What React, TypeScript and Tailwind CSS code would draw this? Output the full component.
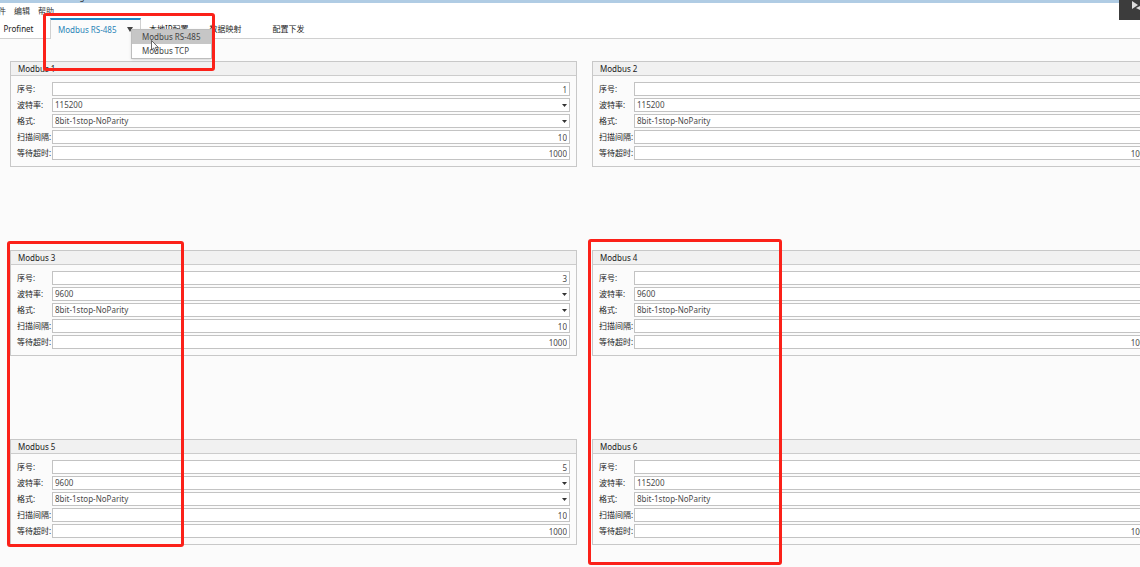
import React, { useState } from 'react';
import { clsx } from 'clsx';

type Channel = {
  id: number;
  baud: string;
  format: string;
  scan: number;
  timeout: number;
};

const channels: Channel[] = [
  { id: 1, baud: '115200', format: '8bit-1stop-NoParity', scan: 10, timeout: 1000 },
  { id: 2, baud: '115200', format: '8bit-1stop-NoParity', scan: 10, timeout: 1000 },
  { id: 3, baud: '9600', format: '8bit-1stop-NoParity', scan: 10, timeout: 1000 },
  { id: 4, baud: '9600', format: '8bit-1stop-NoParity', scan: 10, timeout: 1000 },
  { id: 5, baud: '9600', format: '8bit-1stop-NoParity', scan: 10, timeout: 1000 },
  { id: 6, baud: '115200', format: '8bit-1stop-NoParity', scan: 10, timeout: 1000 },
];

const baudRates = ['9600', '19200', '38400', '57600', '115200'];
const formats = ['8bit-1stop-NoParity', '8bit-1stop-Even', '8bit-1stop-Odd'];

const fieldClass =
  'block h-[14px] w-full min-w-0 appearance-none rounded-none border border-[#c3c3c3] bg-white px-[2px] py-0 text-[8px] leading-[12px] text-[#4a4a4a] outline-none';

const Row: React.FC<{ id: string; label: string; children: React.ReactNode }> = ({ id, label, children }) => (
  <div className="flex h-[14px] items-center">
    <label htmlFor={id} className="w-[35px] shrink-0 whitespace-nowrap text-[#222222]">
      {label}
    </label>
    <div className="relative min-w-0 flex-1">{children}</div>
  </div>
);

const NumberRow: React.FC<{ id: string; label: string; value: number }> = ({ id, label, value }) => (
  <Row id={id} label={label}>
    <input id={id} type="text" inputMode="numeric" defaultValue={value} className={clsx(fieldClass, 'text-right')} />
  </Row>
);

const SelectRow: React.FC<{ id: string; label: string; value: string; options: string[] }> = ({
  id,
  label,
  value,
  options,
}) => (
  <Row id={id} label={label}>
    <select id={id} defaultValue={value} className={fieldClass}>
      {options.map((o) => (
        <option key={o}>{o}</option>
      ))}
    </select>
    <svg className="pointer-events-none absolute top-[6px] right-[3px] h-[3px] w-[5px]" viewBox="0 0 5 3">
      <path d="M0 0h5L2.5 3z" fill="#333333" />
    </svg>
  </Row>
);

const ChannelPanel: React.FC<{ channel: Channel }> = ({ channel }) => {
  const key = `ch${channel.id}`;
  return (
    <section className="border border-[#c8c8c8]">
      <h2 className="h-[14px] border-b border-[#cccccc] bg-[#f1f1f1] px-[7px] leading-[14px] text-[#222222]">
        Modbus {channel.id}
      </h2>
      <div className="flex flex-col gap-[2px] px-[6px] py-[6px]">
        <NumberRow id={`${key}-no`} label="序号:" value={channel.id} />
        <SelectRow id={`${key}-baud`} label="波特率:" value={channel.baud} options={baudRates} />
        <SelectRow id={`${key}-format`} label="格式:" value={channel.format} options={formats} />
        <NumberRow id={`${key}-scan`} label="扫描间隔:" value={channel.scan} />
        <NumberRow id={`${key}-timeout`} label="等待超时:" value={channel.timeout} />
      </div>
    </section>
  );
};

const Highlight: React.FC<{ className: string }> = ({ className }) => (
  <div className={clsx('pointer-events-none absolute z-20 rounded-[3px] border-3 border-[#fb2119]', className)} />
);

export default function App() {
  const [mode, setMode] = useState('Modbus RS-485');

  return (
    <div className="relative min-h-screen overflow-hidden bg-[#fbfbfb] font-['Noto_Sans','Noto_Sans_CJK_SC',sans-serif] text-[8px] leading-[12px]">
      <header className="bg-white">
        <div className="flex h-[3px] items-end overflow-hidden bg-[#b0cce4] pl-[27px] text-[#333333]">
          <h1>Modbus Configuration Tool</h1>
        </div>
        <nav className="flex h-[15px] items-center gap-[8px] text-[#333333]">
          <button type="button" className="-ml-[10px]">文件</button>
          <button type="button">编辑</button>
          <button type="button">帮助</button>
        </nav>
        <div className="flex h-[21px] border-b border-[#d0d0d0] text-[#222222]">
          <button type="button" className="w-[50px] pt-[2px] pr-[13px] text-center">Profinet</button>
          <div className="relative -mb-px flex w-[91px] items-center justify-between border-x border-t-2 border-x-[#d0d0d0] border-t-[#1f86c4] bg-[#fbfbfb] px-[7px]">
            <button type="button" className="text-[#2b84b8]">{mode}</button>
            <svg className="h-[5px] w-[6px]" viewBox="0 0 6 5">
              <path d="M0 0h6L3 5z" fill="#444444" />
            </svg>
            <div className="absolute top-[9px] left-[80px] z-10 w-[81px] border border-[#bdbdbd] bg-white shadow-sm">
              {['Modbus RS-485', 'Modbus TCP'].map((item) => (
                <button
                  key={item}
                  type="button"
                  onClick={() => setMode(item)}
                  className={clsx(
                    'block h-[14px] w-full pl-[10px] text-left text-[#444444]',
                    item === mode ? 'bg-[#c6c6c6]' : 'bg-white',
                  )}
                >
                  {item}
                </button>
              ))}
              <svg className="absolute top-[10px] left-[19px] h-[12px] w-[9px]" viewBox="0 0 9 12">
                <path d="M.5.5v9.500l2.200-2 1.500 3.400 1.600-.7-1.500-3.300h3z" fill="#ffffff" stroke="#444444" strokeWidth=".8" />
              </svg>
            </div>
          </div>
          <button type="button" className="ml-[8px] pt-[2px]">本地IP配置</button>
          <button type="button" className="ml-[21px] pt-[2px]">数据映射</button>
          <button type="button" className="ml-[31px] pt-[2px]">配置下发</button>
        </div>
      </header>

      <main className="grid w-[calc(100%+29px)] grid-cols-2 gap-x-[15px] gap-y-[83px] px-[10px] pt-[22px] pb-[22px]">
        {channels.map((channel) => (
          <ChannelPanel key={channel.id} channel={channel} />
        ))}
      </main>

      <button type="button" aria-label="Play" className="absolute top-0 right-0 flex h-[20px] w-[21px] bg-[#3c3c3c] pt-px pl-[13px]">
        <svg className="h-[10px] w-[8px]" viewBox="0 0 8 10">
          <path d="M0 0l6 4-6 4z" fill="#dddddd" />
          <path d="M4 7l4-2v4z" fill="#dddddd" />
        </svg>
      </button>

      <Highlight className="top-[13px] left-[43px] h-[58px] w-[172px]" />
      <Highlight className="top-[241px] left-[7px] h-[306px] w-[177px]" />
      <Highlight className="top-[239px] left-[588px] h-[326px] w-[194px]" />
    </div>
  );
}
